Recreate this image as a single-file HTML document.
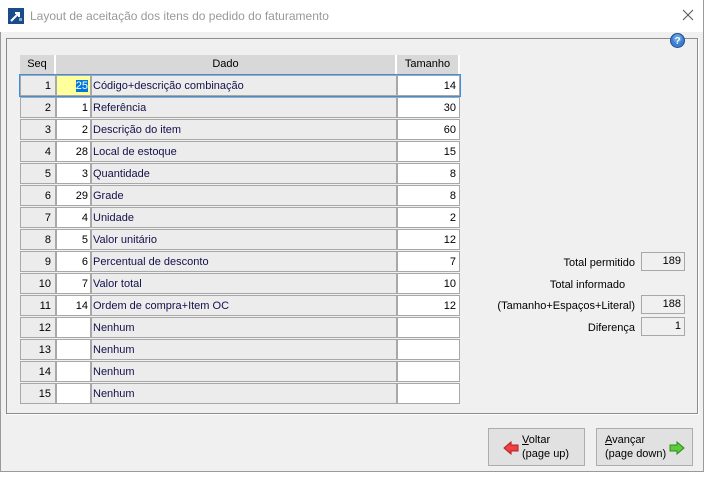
<!DOCTYPE html>
<html><head><meta charset="utf-8"><style>
*{margin:0;padding:0;box-sizing:border-box}
body{width:718px;height:479px;background:#fff;position:relative;overflow:hidden;font-family:"Liberation Sans",Tahoma,sans-serif;font-size:11px;color:#000}
.win{position:absolute;left:0;top:0;width:704px;height:472px;background:#f0f0f0;border:1px solid #9a9a9a;border-top:none}
.title{position:absolute;left:0;top:0;width:703px;height:32px;background:#fff}
.title span{position:absolute;left:30px;top:9px;font-size:12px;color:#999}
.panel{position:absolute;left:6px;top:38px;width:692px;height:376px;border:1px solid #8c8c8c;box-shadow:1px 1px 0 #fff}
.a{position:absolute}
.hd{position:absolute;top:55px;height:19px;background:#d8d8d8;border-right:2px solid #fff;text-align:center;line-height:19px;font-size:11px}
.cell{position:absolute;height:21px;border:1px solid #a8a8a8;line-height:20px;font-size:11px;white-space:nowrap}
.seq{left:20px;width:36px;background:#ececec;text-align:right;padding-right:4px}
.val{left:55px;width:36px;background:#fff;text-align:right;padding-right:2px;border-left:2px solid #a8a8a8}
.dado{left:90px;width:307px;background:#ececec;padding-left:1px;color:#14104a;border-left:2px solid #a8a8a8}
.tam{left:397px;width:63px;background:#fff;text-align:right;padding-right:3px}
.lbl{position:absolute;font-size:11px;text-align:right}
.box{position:absolute;left:641px;width:44px;height:19px;border:1px solid #a8a8a8;text-align:right;padding-right:3px;line-height:17px}
.btn{position:absolute;top:428px;width:97px;height:38px;background:#e1e1e1;border:1px solid #adadad;font-size:11px;line-height:14px}
</style></head><body>
<div class="win"></div>
<div class="title">
<svg class="a" style="left:8px;top:8px" width="16" height="16"><rect width="16" height="16" fill="#1a4c8c"/><path d="M3 13 L11 5 M7 5 H11 V9" stroke="#fff" stroke-width="2" fill="none"/><rect x="11" y="10" width="3" height="3" fill="#8ab"/></svg>
<span>Layout de aceitação dos itens do pedido do faturamento</span>
<svg class="a" style="left:682px;top:9px" width="12" height="12"><path d="M1 1L11 11M11 1L1 11" stroke="#555" stroke-width="1"/></svg>
</div>
<div class="panel"></div>
<svg class="a" style="left:670px;top:33px" width="15" height="15"><circle cx="7.5" cy="7.5" r="7" fill="#3a7fd0" stroke="#1d4f90"/><circle cx="7.5" cy="5.5" r="4.5" fill="#7fb2ea" opacity=".6"/><text x="7.5" y="11" font-size="10" font-weight="bold" fill="#fff" text-anchor="middle" font-family="Liberation Sans">?</text></svg>
<div class="hd" style="left:20px;width:36px">Seq</div>
<div class="hd" style="left:56px;width:341px">Dado</div>
<div class="hd" style="left:397px;width:63px">Tamanho</div>
<div id="rows"></div>
<script>
var d=[[25,"Código+descrição combinação",14],[1,"Referência",30],[2,"Descrição do item",60],[28,"Local de estoque",15],[3,"Quantidade",8],[29,"Grade",8],[4,"Unidade",2],[5,"Valor unitário",12],[6,"Percentual de desconto",7],[7,"Valor total",10],[14,"Ordem de compra+Item OC",12],["","Nenhum",""],["","Nenhum",""],["","Nenhum",""],["","Nenhum",""]];
var h="";
for(var i=0;i<15;i++){var t=75+22*i;var r=d[i];
h+='<div class="cell seq" style="top:'+t+'px">'+(i+1)+'</div>';
h+='<div class="cell val" style="top:'+t+'px;'+(i==0?'background:#ffff9c':'')+'">'+(i==0?'<span style="background:#0078d7;color:#fff">25</span>':r[0])+'</div>';
h+='<div class="cell dado" style="top:'+t+'px">'+r[1]+'</div>';
h+='<div class="cell tam" style="top:'+t+'px">'+r[2]+'</div>';}
h+='<div class="a" style="left:19px;top:74px;width:442px;height:23px;border:1px solid #3c8fe0"></div>';
document.getElementById("rows").innerHTML=h;
</script>
<div class="lbl" style="left:500px;width:135px;top:257px">Total permitido</div>
<div class="box" style="top:252px">189</div>
<div class="lbl" style="left:500px;width:135px;top:279px;text-align:center;padding-left:40px">Total informado</div>
<div class="lbl" style="left:480px;width:155px;top:300px">(Tamanho+Espaços+Literal)</div>
<div class="box" style="top:295px">188</div>
<div class="lbl" style="left:500px;width:135px;top:322px">Diferença</div>
<div class="box" style="top:317px">1</div>
<div class="btn" style="left:488px">
<svg class="a" style="left:14px;top:12px" width="16" height="14"><path d="M1 7 L8 1 V4 H15 V10 H8 V13 Z" fill="#f04040" stroke="#b02020"/></svg>
<div class="a" style="left:33px;top:4px"><u>V</u>oltar<br>(page up)</div></div>
<div class="btn" style="left:596px">
<div class="a" style="left:8px;top:4px"><u>A</u>vançar<br>(page down)</div>
<svg class="a" style="left:72px;top:12px" width="16" height="14"><path d="M15 7 L8 1 V4 H1 V10 H8 V13 Z" fill="#5ccc3a" stroke="#2e8a1e"/></svg></div>
</body></html>
